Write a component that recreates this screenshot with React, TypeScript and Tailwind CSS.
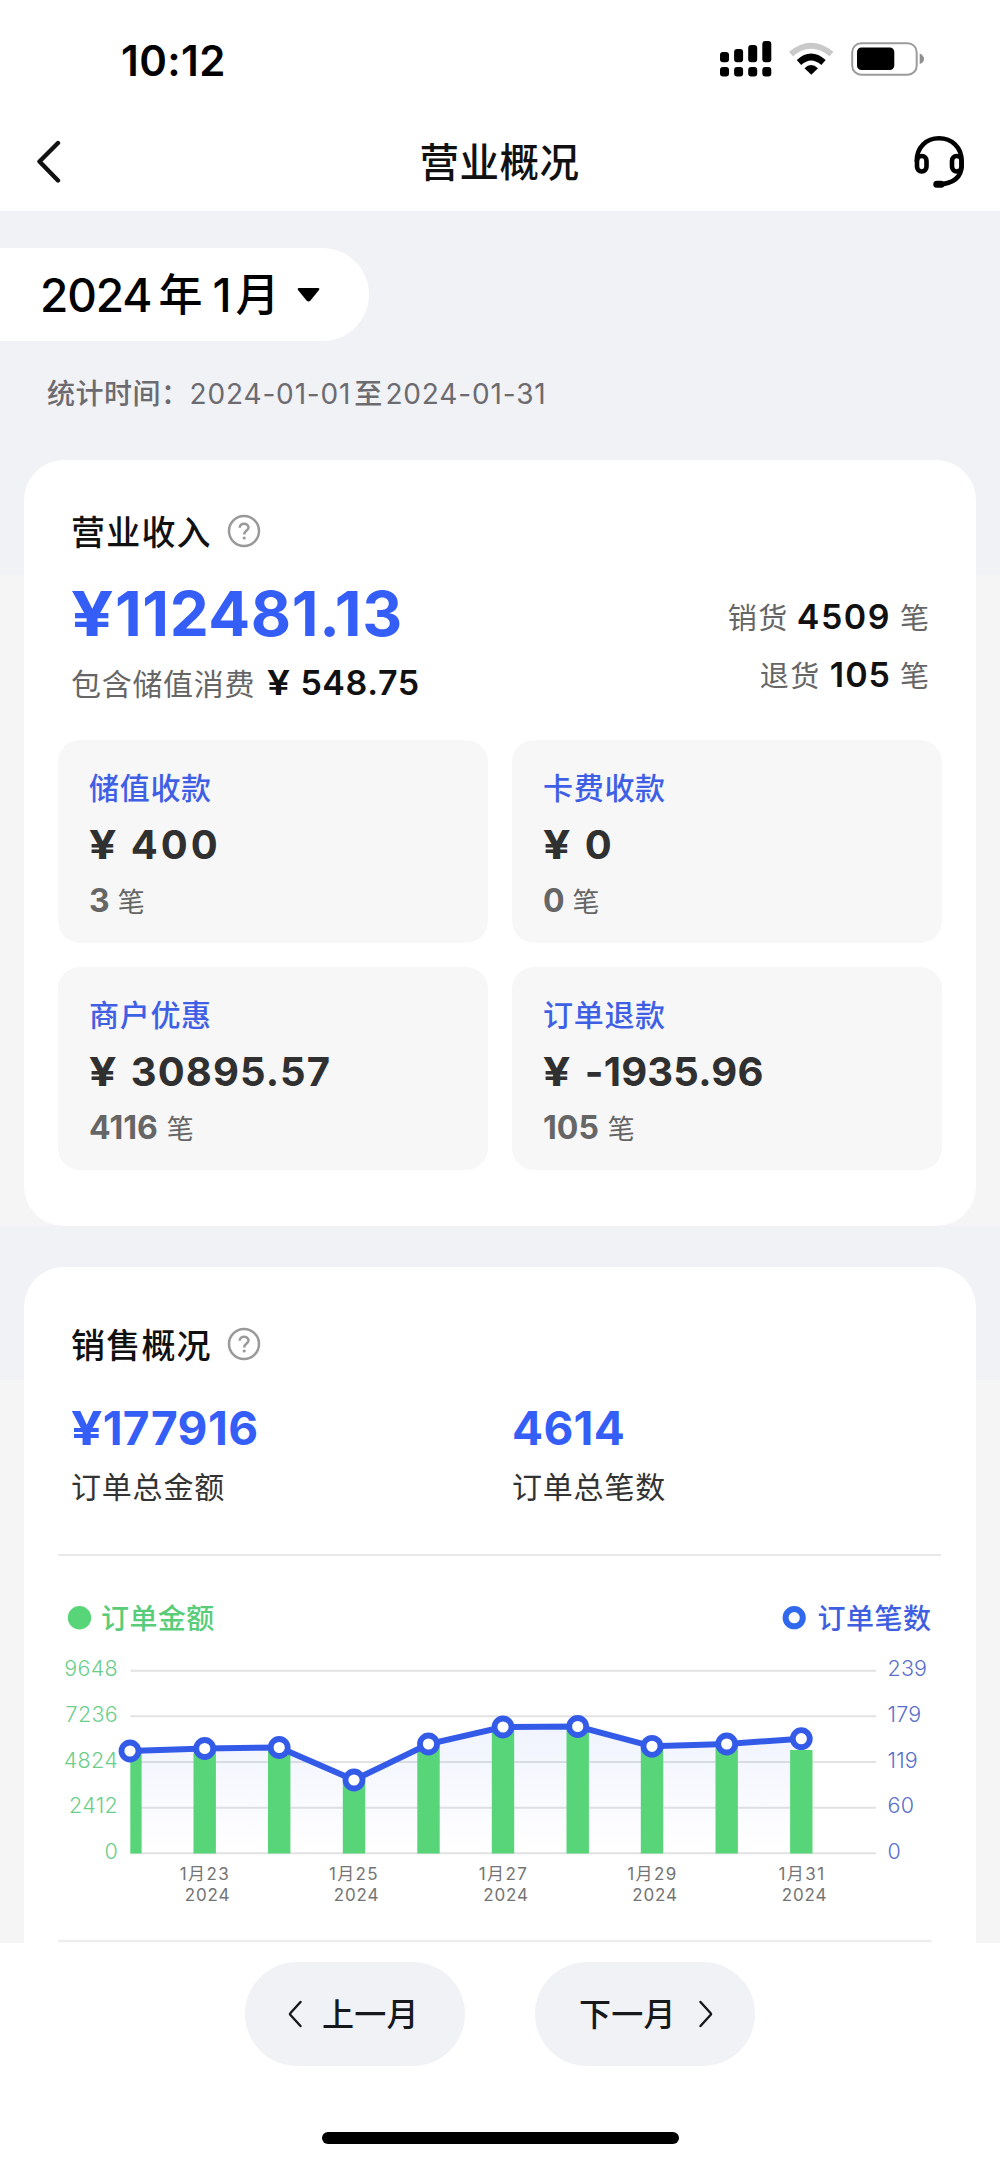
import React from "react";

type Tile = {
  label: string;
  amount: string;
  count: string;
  amountClass: string;
  countClass: string;
};

const tiles: Tile[] = [
  { label: "储值收款", amount: "400", count: "3", amountClass: "tracking-[3px]", countClass: "mr-[8px]" },
  { label: "卡费收款", amount: "0", count: "0", amountClass: "tracking-[0px]", countClass: "mr-[8px]" },
  { label: "商户优惠", amount: "30895.57", count: "4116", amountClass: "tracking-[1.1px]", countClass: "mr-[9px] tracking-[0px]" },
  { label: "订单退款", amount: "-1935.96", count: "105", amountClass: "tracking-[0.2px]", countClass: "mr-[9px] tracking-[0px]" },
];

// one entry per day, bar is the top of the green column, dot the order count
const points = [
  { x: 130, dot: 1751, bar: 1751 },
  { x: 204.7, dot: 1748.5, bar: 1750 },
  { x: 279.2, dot: 1747.5, bar: 1749 },
  { x: 354, dot: 1780, bar: 1782 },
  { x: 428.5, dot: 1744, bar: 1746 },
  { x: 503, dot: 1727, bar: 1729 },
  { x: 577.7, dot: 1726.5, bar: 1729 },
  { x: 652, dot: 1746.3, bar: 1748 },
  { x: 726.7, dot: 1744, bar: 1746 },
  { x: 801.3, dot: 1738.7, bar: 1750 },
];

const grid = [
  { y: 1670.7, left: "9648", right: "239" },
  { y: 1716.3, left: "7236", right: "179" },
  { y: 1762, left: "4824", right: "119" },
  { y: 1807.7, left: "2412", right: "60" },
  { y: 1853.3, left: "0", right: "0" },
];

const dates = [
  { x: 204.5, day: "23" },
  { x: 353.5, day: "25" },
  { x: 503, day: "27" },
  { x: 652, day: "29" },
  { x: 801.5, day: "31" },
];

const StatusIcons = () => (
  <svg width="206" height="38" viewBox="719 40 206 38">
    {[0, 1, 2, 3].map((i) => (
      <g key={i}>
        <rect x={720 + i * 14.1} y={[52, 49, 45, 41][i]} width="9" height={[10.3, 13.3, 17.3, 21.3][i]} rx="3" />
        <rect x={720 + i * 14.1} y="67" width="9" height="9.5" rx="3" />
      </g>
    ))}
    <path d="M791 54 Q811 37.5 831.500 54" fill="none" stroke="#c9c9c9" strokeWidth="6" />
    <path d="M799 62.500 Q811 51.500 823.500 62.500" fill="none" stroke="#000" strokeWidth="6.500" />
    <path d="M804.500 68.300 Q811 61.500 818 68.300 L811.300 74.800 Z" />
    <rect x="852.200" y="43.200" width="64.500" height="31.500" rx="9" fill="none" stroke="#9b9b9b" strokeWidth="2" />
    <rect x="857" y="47.500" width="37.300" height="22.500" rx="4.500" />
    <path d="M919.700 53.500 Q924 55.500 924 59 Q924 62.500 919.700 64 Z" fill="#8f8f8f" />
  </svg>
);

const Headset = () => (
  <svg width="52" height="54" viewBox="913 134 52 54" fill="none" stroke="#000" strokeWidth="4.600" strokeLinecap="round">
    <path d="M916.800 160 C916.800 146 926.500 137.300 939 137.300 C951.500 137.300 961.600 146 961.600 160 L961.600 165 C961.600 176 953 183 939 183.200" />
    <rect x="917" y="155" width="9.500" height="15.500" rx="4.700" />
    <rect x="952" y="155" width="9.500" height="15.500" rx="4.700" />
    <path d="M936.800 183.300 H941" strokeWidth="7" />
  </svg>
);

const Help = () => (
  <svg className="ml-[15px]" width="34" height="34" viewBox="0 0 34 34" fill="none" stroke="#999" strokeWidth="2.500">
    <circle cx="17" cy="17" r="15" />
    <path d="M12.700 13.800 C12.700 8.500 21.500 8.500 21.500 13.500 C21.500 16.500 17.200 16.600 17.200 20.500" />
    <circle cx="17.200" cy="24" r="1.600" fill="#999" stroke="none" />
  </svg>
);

const Yen = ({ className = "" }: { className?: string }) => (
  <span className={`inline-block origin-left scale-x-[1.2] ${className}`}>¥</span>
);

const CardTitle = ({ children }: { children: React.ReactNode }) => (
  <div className="flex h-10 items-center">
    <h2 className="pt-[3px] text-[34px] font-medium leading-none tracking-[1.2px] text-[#111]">{children}</h2>
    <Help />
  </div>
);

const Chart = () => {
  const line = points.map((p) => `${p.x},${p.dot}`).join(" ");
  return (
    <svg className="block" width="952" height="388" viewBox="24 1556 952 388">
      <defs>
        <linearGradient id="area" x1="0" y1="1727" x2="0" y2="1853" gradientUnits="userSpaceOnUse">
          <stop offset="0" stopColor="#335df0" stopOpacity="0.07" />
          <stop offset="1" stopColor="#335df0" stopOpacity="0" />
        </linearGradient>
      </defs>
      <circle cx="79.500" cy="1617.700" r="11.700" fill="#58d578" />
      <circle cx="794.200" cy="1617.700" r="8.600" fill="#fff" stroke="#3068ee" strokeWidth="6" />
      <text x="101" y="1628.500" fontSize="28" fontWeight="500" letterSpacing="0.4" fill="#58cc78">订单金额</text>
      <text x="817.500" y="1628.500" fontSize="28" fontWeight="500" letterSpacing="0.5" fill="#3f5fe0">订单笔数</text>
      {grid.map((g) => (
        <g key={g.y}>
          <path d={`M130.500 ${g.y}H876`} stroke="#e2e2e4" strokeWidth="2" />
          <text x="118" y={g.y + 5.5} fontSize="21.500" fontWeight="300" letterSpacing="0.3" textAnchor="end" fill="#6bce8b">{g.left}</text>
          <text x="887.500" y={g.y + 5.5} fontSize="21.500" fontWeight="300" letterSpacing="0.2" fill="#5a6ecb">{g.right}</text>
        </g>
      ))}
      <polygon points={`130,1853 ${line} 801,1853`} fill="url(#area)" />
      {points.map((p, i) => (
        <rect key={p.x} x={i === 0 ? 130.3 : p.x - 11.2} y={p.bar} width={i === 0 ? 11.3 : 22.4} height={1853.5 - p.bar} fill="#58d578" />
      ))}
      <polyline points={line} fill="none" stroke="#345be8" strokeWidth="6" />
      {points.map((p) => (
        <circle key={p.x} cx={p.x} cy={p.dot} r="8.500" fill="#fff" stroke="#345be8" strokeWidth="5.800" />
      ))}
      {dates.map((d) => (
        <g key={d.day} fontSize="17" fill="#747474" textAnchor="middle" letterSpacing="1.400">
          <text x={d.x + 0.5} y="1880">1月{d.day}</text>
          <text x={d.x + 3} y="1900.500" letterSpacing="0.8">2024</text>
        </g>
      ))}
      <path d="M58 1941H931.500" stroke="#ededed" strokeWidth="2.500" />
    </svg>
  );
};

const App = () => {
  return (
    <main className="flex h-[2163px] w-[1000px] flex-col overflow-hidden bg-white font-['Inter','Noto_Sans_CJK_SC',sans-serif] text-black">
      <header className="h-[211px]">
        <div className="flex h-[118px] items-center justify-between pl-[121px] pr-[75px]">
          <span className="pt-[3px] text-[42px] font-semibold leading-none tracking-[0.4px]">10:12</span>
          <StatusIcons />
        </div>
        <div className="flex h-[88px] items-center justify-between pl-9 pr-[35px]">
          <svg width="50" height="44" viewBox="0 0 50 44" fill="none" stroke="#111" strokeWidth="4.400" strokeLinecap="round" strokeLinejoin="round">
            <path d="M22 3 L3.500 21.500 L22 40.500" />
          </svg>
          <h1 className="pt-[3px] text-[39.5px] font-medium leading-none tracking-[0.5px] text-[#111]">营业概况</h1>
          <Headset />
        </div>
      </header>

      <div className="h-[1732px] overflow-hidden bg-[linear-gradient(#f1f2f6_364px,#f5f5f5_364px,#f5f5f5_1015px,#f1f2f6_1015px,#f1f2f6_1169px,#f5f5f5_1169px)] pt-[37px]">
        <button className="flex h-[93px] w-[369px] items-center rounded-r-full bg-white pl-10 leading-none">
          <span className="text-[46px] font-medium tracking-[-1.1px]">2024</span>
          <span className="ml-[7px] text-[44px] font-medium">年</span>
          <span className="ml-[10px] text-[46px] font-medium">1</span>
          <span className="ml-[4px] text-[44px] font-medium">月</span>
          <svg className="ml-[17px]" width="24" height="16" viewBox="0 0 24 16">
            <path d="M2 1 H21 Q23 1 22 3 L13.500 13.500 Q11.500 15.500 9.500 13.500 L1 3 Q0 1 2 1Z" />
          </svg>
        </button>

        <p className="mt-[37px] flex h-8 items-center pl-[47px] text-[28px] leading-none text-[#6b6b70]">
          <span className="font-medium tracking-[0.5px]">统计时间：</span>
          <span className="tracking-[0.85px]">2024-01-01</span>
          <span className="mx-[3px] font-medium">至</span>
          <span className="tracking-[0.85px]">2024-01-31</span>
        </p>

        <section className="mx-6 mt-[50px] h-[766px] rounded-[40px] bg-white px-[34px] pt-[51px]">
          <div className="flex h-[229px] flex-col px-[13px]">
            <CardTitle>营业收入</CardTitle>
            <div className="mt-8 flex justify-between leading-none">
              <div>
                <p className="text-[62px] font-bold tracking-[0.6px] text-[#345ef6]">
                  <Yen className="mr-[8px]" />
                  112481.13
                </p>
                <p className="mt-5 flex h-9 items-center">
                  <span className="pt-[2px] text-[30px] tracking-[0.7px] text-[#666]">包含储值消费</span>
                  <Yen className="ml-[12px] mr-[14px] text-[34px] font-semibold text-[#111]" />
                  <span className="text-[34px] font-semibold tracking-[0.6px] text-[#111]">548.75</span>
                </p>
              </div>
              <div className="mt-4 flex flex-col items-end gap-[22px]">
                <p className="flex h-9 items-center text-[29px] text-[#666]">
                  <span className="pt-[2px] tracking-[1.5px]">销货</span>
                  <b className="ml-[8px] mr-[9px] text-[34px] font-semibold tracking-[1.5px] text-[#111]">4509</b>
                  <span className="pt-[2px]">笔</span>
                </p>
                <p className="flex h-9 items-center text-[29px] text-[#666]">
                  <span className="pt-[2px] tracking-[1.5px]">退货</span>
                  <b className="ml-[9px] mr-[9px] text-[34px] font-semibold tracking-[1px] text-[#111]">105</b>
                  <span className="pt-[2px]">笔</span>
                </p>
              </div>
            </div>
          </div>

          <div className="grid grid-cols-2 gap-6">
            {tiles.map((t) => (
              <div key={t.label} className="h-[203px] rounded-[22px] bg-[#f7f7f7] px-[31px] pt-[33px] leading-none">
                <p className="h-[30px] text-[30px] font-medium tracking-[0.7px] text-[#3f60e4]">{t.label}</p>
                <p className="mt-[22px] flex h-10 items-center text-[40px] font-bold text-[#303030]">
                  <Yen className="mr-[19px]" />
                  <span className={t.amountClass}>{t.amount}</span>
                </p>
                <p className="mt-5 flex h-8 items-center text-[#666]">
                  <span className={`text-[32px] font-bold ${t.countClass}`}>{t.count}</span>
                  <span className="pt-[2px] text-[27px]">笔</span>
                </p>
              </div>
            ))}
          </div>
        </section>

        <section className="mx-6 mt-[41px] h-[677px] rounded-t-[40px] bg-white">
          <div className="h-[287px] px-[47px] pt-[57px]">
            <CardTitle>销售概况</CardTitle>
            <div className="mt-[41px] grid grid-cols-[441px_1fr] leading-none">
              <div>
                <p className="text-[46px] font-bold tracking-[0.4px] text-[#345ef6]">
                  <Yen className="mr-[5px]" />
                  177916
                </p>
                <p className="mt-[21px] text-[30px] tracking-[0.8px] text-[#333]">订单总金额</p>
              </div>
              <div>
                <p className="text-[46px] font-bold tracking-[0.3px] text-[#345ef6]">4614</p>
                <p className="mt-[21px] text-[30px] tracking-[0.8px] text-[#333]">订单总笔数</p>
              </div>
            </div>
          </div>
          <div className="ml-[34px] mr-[35px] h-[2px] bg-[#e8e8ea]" />
          <Chart />
        </section>
      </div>

      <footer className="flex flex-1 flex-col items-center bg-white pt-[19px]">
        <div className="flex gap-[70px] leading-none text-[#16181c]">
          <button className="flex h-[104px] w-[220px] items-center rounded-full bg-[#f1f2f6] pl-[43px]">
            <svg width="14" height="28" viewBox="0 0 14 26" fill="none" stroke="currentColor" strokeWidth="2.400" strokeLinecap="round" strokeLinejoin="round">
              <path d="M12.500 1 L2.500 12 Q1.500 13 2.500 14 L12.500 25" />
            </svg>
            <span className="ml-[20px] pt-[1px] text-[32px] font-medium tracking-[0.3px]">上一月</span>
          </button>
          <button className="flex h-[104px] w-[220px] items-center rounded-full bg-[#f1f2f6] pl-[44px]">
            <span className="mr-[23px] pt-[1px] text-[32px] font-medium tracking-[0.3px]">下一月</span>
            <svg width="14" height="28" viewBox="0 0 14 26" fill="none" stroke="currentColor" strokeWidth="2.400" strokeLinecap="round" strokeLinejoin="round">
              <path d="M1.500 1 L11.500 12 Q12.500 13 11.500 14 L1.500 25" />
            </svg>
          </button>
        </div>
        <div className="mt-[66px] h-3 w-[357px] rounded-full bg-black" />
      </footer>
    </main>
  );
};

export default App;
